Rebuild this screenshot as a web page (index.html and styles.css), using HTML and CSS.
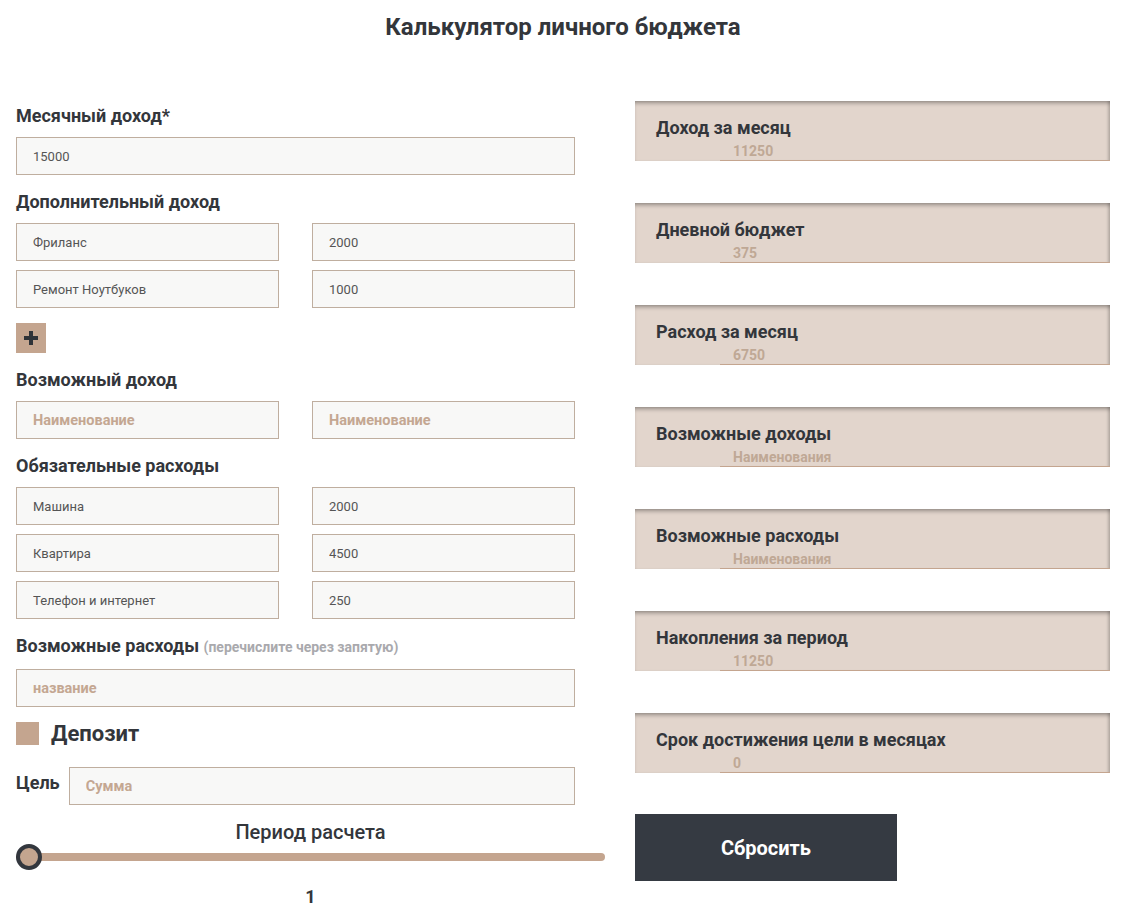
FILE: index.html
```html
<!DOCTYPE html>
<html lang="ru">
<head>
<meta charset="utf-8">
<title>Калькулятор личного бюджета</title>
<link rel="stylesheet" href="styles.css">
</head>
<body>
<div class="page">
  <h1 class="title">Калькулятор личного бюджета</h1>
  <div class="main">
    <div class="left">
      <div class="label first">Месячный доход*</div>
      <input class="field full" type="text" value="15000">

      <div class="label">Дополнительный доход</div>
      <div class="rows">
        <div class="pair">
          <input class="field" type="text" value="Фриланс">
          <input class="field" type="text" value="2000">
        </div>
        <div class="pair">
          <input class="field" type="text" value="Ремонт Ноутбуков">
          <input class="field" type="text" value="1000">
        </div>
      </div>
      <button class="plus" type="button" aria-label="Добавить">
        <svg width="14" height="14" viewBox="0 0 14 14"><rect x="5" y="0" width="4" height="14" fill="#2f3338"/><rect x="0" y="5" width="14" height="4" fill="#2f3338"/></svg>
      </button>

      <div class="label">Возможный доход</div>
      <div class="rows">
        <div class="pair">
          <input class="field" type="text" placeholder="Наименование">
          <input class="field" type="text" placeholder="Наименование">
        </div>
      </div>

      <div class="label">Обязательные расходы</div>
      <div class="rows">
        <div class="pair">
          <input class="field" type="text" value="Машина">
          <input class="field" type="text" value="2000">
        </div>
        <div class="pair">
          <input class="field" type="text" value="Квартира">
          <input class="field" type="text" value="4500">
        </div>
        <div class="pair">
          <input class="field" type="text" value="Телефон и интернет">
          <input class="field" type="text" value="250">
        </div>
      </div>

      <div class="label hinted">Возможные расходы <span class="hint">(перечислите через запятую)</span></div>
      <input class="field full" type="text" placeholder="название">

      <div class="deposit">
        <span class="check"></span>
        <span class="deposit-text">Депозит</span>
      </div>

      <div class="goal">
        <span class="goal-label">Цель</span>
        <input class="field goal-input" type="text" placeholder="Сумма">
      </div>

      <div class="period-title">Период расчета</div>
      <input class="range" type="range" min="1" max="12" value="1">
      <div class="period-value">1</div>
    </div>

    <div class="right">
      <div class="card">
        <div class="card-title">Доход за месяц</div>
        <input class="card-value" type="text" value="11250" readonly>
      </div>
      <div class="card">
        <div class="card-title">Дневной бюджет</div>
        <input class="card-value" type="text" value="375" readonly>
      </div>
      <div class="card">
        <div class="card-title">Расход за месяц</div>
        <input class="card-value" type="text" value="6750" readonly>
      </div>
      <div class="card">
        <div class="card-title">Возможные доходы</div>
        <input class="card-value" type="text" placeholder="Наименования" readonly>
      </div>
      <div class="card">
        <div class="card-title">Возможные расходы</div>
        <input class="card-value" type="text" placeholder="Наименования" readonly>
      </div>
      <div class="card">
        <div class="card-title">Накопления за период</div>
        <input class="card-value" type="text" value="11250" readonly>
      </div>
      <div class="card">
        <div class="card-title">Срок достижения цели в месяцах</div>
        <input class="card-value" type="text" value="0" readonly>
      </div>
      <button class="reset" type="button">Сбросить</button>
    </div>
  </div>
</div>
</body>
</html>
```

FILE: styles.css
```css
* { box-sizing: border-box; }

body {
  margin: 0;
  background: #ffffff;
  font-family: Roboto, "Liberation Sans", sans-serif;
  color: #33363b;
}

.page {
  width: 1140px;
}

.title {
  margin: 13px 14px 60px 0;
  font-size: 24px;
  line-height: 28px;
  font-weight: 700;
  text-align: center;
  color: #33363b;
}

.main {
  display: flex;
  gap: 30px;
  padding-left: 16px;
}

.left {
  width: 589px;
  display: flex;
  flex-direction: column;
  align-items: flex-start;
}

.label {
  font-size: 18px;
  line-height: 21px;
  font-weight: 700;
  margin: 16px 0 11px;
  color: #33363b;
}
.label.first { margin-top: 4px; }
.label.hinted { margin-bottom: 11px; }

.hint {
  font-size: 14px;
  font-weight: 700;
  color: #a9a9ad;
}

.field {
  display: block;
  height: 38px;
  width: 263px;
  border: 1px solid #bfae9f;
  background: #f8f8f7;
  padding: 0 16px;
  font-family: Roboto, "Liberation Sans", sans-serif;
  font-size: 13px;
  color: #555555;
  outline: none;
}
.field::placeholder {
  color: #c4a792;
  font-weight: 700;
  font-size: 14.5px;
}
.field.full { width: 559px; }

.rows {
  display: flex;
  flex-direction: column;
  gap: 9px;
}

.pair {
  display: flex;
  gap: 33px;
}

.plus {
  width: 30px;
  height: 30px;
  margin-top: 15px;
  padding: 0;
  border: none;
  background: #c4a58f;
  display: flex;
  align-items: center;
  justify-content: center;
}

.deposit {
  display: flex;
  align-items: center;
  gap: 12px;
  margin-top: 15px;
  height: 23px;
}
.check {
  width: 23px;
  height: 23px;
  background: #c4a58f;
}
.deposit-text {
  font-size: 22px;
  font-weight: 700;
  color: #33363b;
}

.goal {
  display: flex;
  align-items: center;
  gap: 9px;
  margin-top: 22px;
}
.goal-label {
  font-size: 18px;
  font-weight: 700;
  margin-top: -8px;
}
.goal-input { width: 506px; }

.period-title {
  align-self: stretch;
  text-align: center;
  font-size: 20px;
  line-height: 23px;
  font-weight: 500;
  margin-top: 16px;
  color: #33363b;
}

.range {
  -webkit-appearance: none;
  appearance: none;
  width: 589px;
  height: 26px;
  margin: 0;
  background: transparent;
}
.range::-webkit-slider-runnable-track {
  height: 8px;
  border-radius: 4px;
  background: #c4a58f;
}
.range::-webkit-slider-thumb {
  -webkit-appearance: none;
  width: 26px;
  height: 26px;
  margin-top: -9px;
  border-radius: 50%;
  background: #c4a58f;
  border: 4px solid #33373e;
}

.period-value {
  align-self: stretch;
  text-align: center;
  font-size: 18px;
  line-height: 21px;
  font-weight: 700;
  margin-top: 16px;
  color: #33363b;
}

.right {
  width: 475px;
  display: flex;
  flex-direction: column;
  gap: 42px;
}

.card {
  height: 60px;
  background: #e2d5cc;
  padding: 16px 0 0 21px;
  display: flex;
  flex-direction: column;
  box-shadow: inset 0 4px 4px -2px rgba(0, 0, 0, 0.35), inset -3px 0 3px -1px rgba(0, 0, 0, 0.18);
}
.card-title {
  font-size: 18px;
  line-height: 21px;
  font-weight: 700;
  color: #33363b;
}
.card-value {
  margin-left: 64px;
  margin-top: 1px;
  height: 22px;
  width: calc(100% - 64px);
  border: none;
  border-bottom: 1px solid #c4a58f;
  background: transparent;
  padding: 2px 13px 0;
  font-family: Roboto, "Liberation Sans", sans-serif;
  font-size: 14px;
  font-weight: 700;
  color: #bfa895;
  outline: none;
}
.card-value::placeholder {
  color: #bfa895;
}

.reset {
  margin-top: -1px;
  width: 262px;
  height: 67px;
  border: none;
  background: #353a42;
  color: #ffffff;
  font-family: Roboto, "Liberation Sans", sans-serif;
  font-size: 20px;
  font-weight: 700;
}
```
